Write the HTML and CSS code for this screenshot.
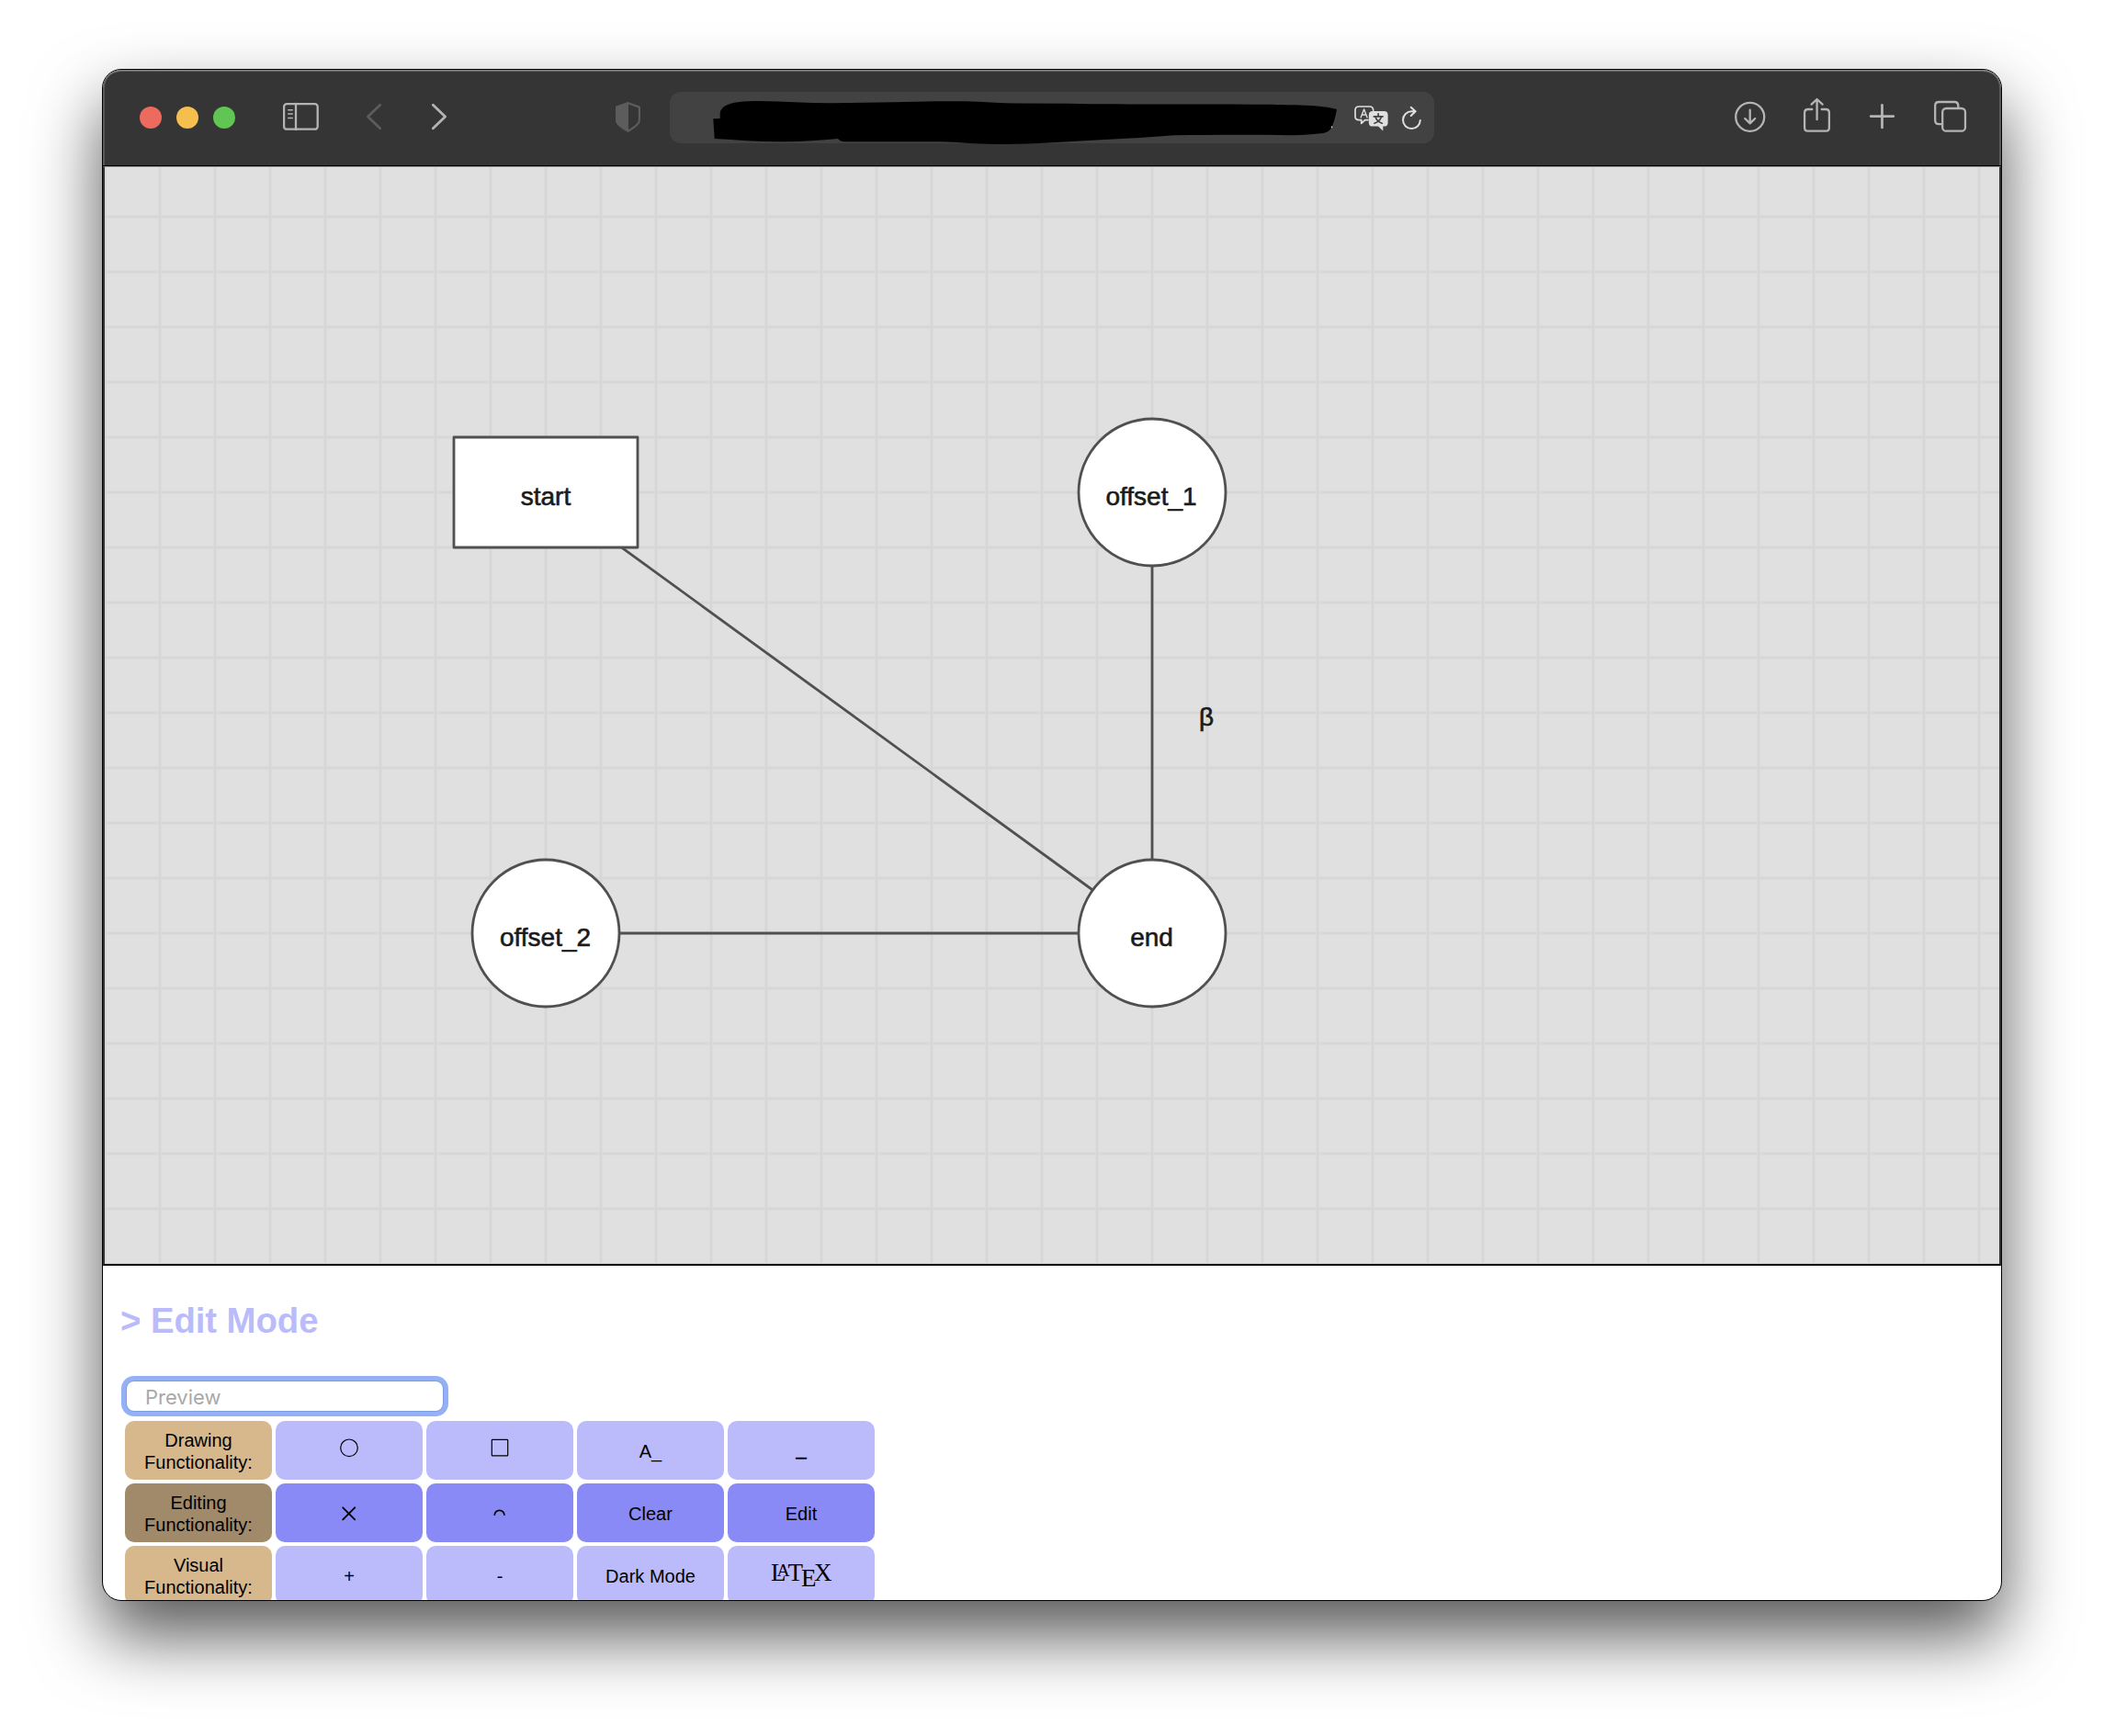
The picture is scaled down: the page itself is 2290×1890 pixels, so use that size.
FILE: index.html
```html
<!DOCTYPE html>
<html lang="en">
<head>
<meta charset="utf-8">
<title>Graph Editor</title>
<link rel="stylesheet" href="styles.css">
</head>
<body>
<main class="window">
  <header class="toolbar">
    <div class="lights"><span class="light red"></span><span class="light yellow"></span><span class="light green"></span></div>
    <svg class="icon sidebar" width="40" height="44" viewBox="308 106 40 44"><rect x="309.1" y="113.1" width="36.6" height="27.6" rx="3"/><path d="M322 113v28"/><path stroke-width="1.6" d="M313.8 119.7h4.4M313.8 124h4.4M313.8 128.5h4.4"/></svg>
    <svg class="icon back" width="18" height="44" viewBox="398 106 18 44"><path stroke-width="2.8" d="M413.7 114.2L400.4 127l13.3 12.8"/></svg>
    <svg class="icon forward" width="18" height="44" viewBox="469 106 18 44"><path stroke-width="2.8" d="M471.3 114.2L484.6 127l-13.3 12.8"/></svg>
    <svg class="shield" width="28" height="44" viewBox="670 106 28 44"><path class="shield-line" d="M683.7 112.2l12.2 4.4v14.5q0 4.6-12.2 11.6q-12.4-7-12.4-11.6v-14.5z"/><path class="shield-fill" d="M684 111l-14 5v15.5q0 5.500 14 12.500z"/></svg>
    <div class="address">
      <svg class="redaction" width="682" height="56" viewBox="775 100 682 56"><path d="M776.3 129.300L783.700 129V123.300C784 117 792 112.500 803 111.300C811 110 819 110 827 110C854 110.500 880 112.500 907 112.300L973 111.300C1000 110.500 1025 110 1050 110.300C1070 110.500 1088 112.500 1107 112.500L1163 112.700C1230 114 1310 113 1380 113.700C1405 114.300 1440 114 1455 119C1454 125 1452.500 131 1450.700 135C1450 140 1446 144 1440 144.900C1430 146 1418 147 1407 147.200C1365 146.500 1320 146.500 1280 147.300C1262 148 1247 150 1230 150.500L1130 155.900C1114 156.500 1099 157 1083 157C1062 157 1043 154.500 1023 154.300H918Q914 154 912 151C893 152.500 873 154.300 853 154.300C827 154.500 802 152.500 777.700 151Z"/><path class="speck" d="M1449 137.500h1.200v1.800h-1.200z"/></svg>
      <svg class="icon bright translate" width="40" height="44" viewBox="1473 106 40 44"><path stroke-width="1.7" d="M1489 130.600h-3.300l-4 3.800v-3.800h-2.600q-4.100 0-4.100-4.100v-6.400q0-4.100 4.100-4.100h11.700q3.700 0 3.900 4.200"/><path stroke-width="1.4" d="M1481.200 127.800l3.400-8.900 3.400 8.900M1482.400 125h4.600"/><path class="solid" d="M1494 121h12.400q4.200 0 4.200 4.200v8.200q0 4.200-4.200 4.200h-1.100v4.800l-5.300-4.800h-6q-4.200 0-4.200-4.200v-8.200q0-4.200 4.200-4.200z"/><path class="cut" d="M1495.300 126.800h9.800M1500.100 123.800v2.600M1497.100 127.500q1.600 5 7.200 6.700M1503.300 127.500q-1.600 5-7.400 6.700"/></svg>
      <svg class="icon bright reload" width="24" height="44" viewBox="1525 106 24 44"><path stroke-width="2" d="M1545.800 131a9.400 9.400 0 1 1-9.400-9.700h4.300M1535.700 116.800l4.900 4.400-4.900 4.800"/></svg>
    </div>
    <svg class="icon download" width="36" height="44" viewBox="1887 106 36 44"><circle cx="1904.700" cy="127.300" r="15.500"/><path d="M1904.700 119.600v14.500M1899.200 129l5.500 5.400 5.500-5.400"/></svg>
    <svg class="icon share" width="32" height="44" viewBox="1962 106 32 44"><path d="M1972.300 119h-4.500q-3.700 0-3.700 3.700v16.200q0 3.700 3.700 3.700h19.400q3.700 0 3.700-3.700v-16.200q0-3.700-3.700-3.700h-4.500M1977.600 130.200v-21.500M1971.600 113.600l6-5.600 6 5.600"/></svg>
    <svg class="icon plus" width="30" height="44" viewBox="2034 106 30 44"><path stroke-width="2.800" d="M2048.500 114.300v24.600M2036.200 126.600h24.600"/></svg>
    <svg class="icon tabs" width="38" height="44" viewBox="2104 106 38 44"><path d="M2113.300 135.200h-3q-4.100 0-4.100-4.100v-16q0-4.100 4.100-4.100h16.900q4.100 0 4.100 4.100v2.700"/><rect x="2114.200" y="118" width="24.800" height="24.700" rx="4"/></svg>
  </header>

  <section class="canvas">
    <svg width="2062" height="1194" viewBox="114 182 2062 1194">
      <defs>
        <pattern id="grid" x="144" y="206" width="60" height="60" patternUnits="userSpaceOnUse">
          <path class="grid-soft" d="M30 0v60M0 30h60"/><path class="grid-core" d="M30 0v60M0 30h60"/>
        </pattern>
      </defs>
      <rect x="114" y="182" width="2062" height="1194" fill="url(#grid)"/>
      <g class="edges"><path d="M594 536L1254 1016"/><path d="M1254 536v480"/><path d="M594 1016h660"/></g>
      <g class="nodes"><rect x="494" y="476" width="200" height="120"/><circle cx="1254" cy="536" r="80"/><circle cx="594" cy="1016" r="80"/><circle cx="1254" cy="1016" r="80"/></g>
      <g class="labels"><text x="594" y="549.500">start</text><text x="1253" y="549.500">offset_1</text><text x="593.500" y="1029.500">offset_2</text><text x="1253.500" y="1029.500">end</text><text x="1313" y="790">β</text></g>
    </svg>
  </section>

  <section class="panel">
    <h3 class="mode">&gt; Edit Mode</h3>
    <input class="preview" type="text" placeholder="Preview">
    <div class="controls">
      <div class="label">Drawing Functionality:</div>
      <div class="button"><svg width="24" height="24" viewBox="0 0 24 24"><circle cx="12" cy="8.300" r="9.300"/></svg></div>
      <div class="button"><svg width="24" height="24" viewBox="0 0 24 24"><rect x="3.300" y="-.700" width="17.400" height="17.600" rx=".600"/></svg></div>
      <div class="button">A_</div>
      <div class="button"><span class="raised">_</span></div>

      <div class="label active">Editing Functionality:</div>
      <div class="button active"><svg class="bold" width="24" height="24" viewBox="0 0 24 24"><path d="M5.200 5.300l13 13M18.200 5.300l-13 13"/></svg></div>
      <div class="button active"><svg class="arc" width="24" height="24" viewBox="0 0 24 24"><path d="M6.200 13.800A5.400 5.400 0 0 1 17 13.800"/></svg></div>
      <div class="button active">Clear</div>
      <div class="button active">Edit</div>

      <div class="label">Visual Functionality:</div>
      <div class="button">+</div>
      <div class="button">-</div>
      <div class="button">Dark Mode</div>
      <div class="button"><svg class="latex" width="68" height="32" viewBox="838 1698 68 32"><text y="1721"><tspan x="839">L</tspan><tspan class="small" x="845.500" y="1715.700">A</tspan><tspan x="857.500" y="1721">T</tspan><tspan x="872" y="1727">E</tspan><tspan x="886" y="1721">X</tspan></text></svg></div>
    </div>
  </section>
</main>
</body>
</html>
```

FILE: styles.css
```css
* { box-sizing: border-box; }

body {
  margin: 0;
  width: 2290px;
  height: 1890px;
  padding: 75px 111px 0;
  overflow: hidden;
  background: #fff;
  font-family: "Liberation Sans", Arial, sans-serif;
}

.window {
  display: flex;
  flex-direction: column;
  width: 2068px;
  height: 1668px;
  border: 1px solid #000;
  border-radius: 21px;
  overflow: hidden;
  background: #fff;
  box-shadow: 0 38px 76px rgba(0, 0, 0, .66);
}

.toolbar {
  display: flex;
  align-items: center;
  flex: none;
  height: 105px;
  background: #353535;
  border-bottom: 1px solid #000;
  border-radius: 20px 20px 0 0;
  box-shadow: inset 0 1px #858585, inset 0 2px #626262, inset 2px 0 #5a5a5a, inset -2px 0 #5a5a5a;
}

.lights { display: flex; gap: 16px; margin-left: 40px; }
.light { width: 24px; height: 24px; border-radius: 50%; }
.red { background: #ed6a5e; }
.yellow { background: #f5bf4f; }
.green { background: #61c554; }

.toolbar svg { flex: none; }
.icon {
  fill: none;
  stroke: #b4b4b4;
  stroke-width: 2.300;
  stroke-linecap: round;
  stroke-linejoin: round;
}
.sidebar { margin-left: 52px; }
.back { margin-left: 50px; stroke: #5c5c5c; }
.forward { margin-left: 53px; }
.shield { margin-left: 183px; }
.shield-line { fill: none; stroke: #5c5c5c; stroke-width: 2.200; stroke-linejoin: round; }
.shield-fill { fill: #5c5c5c; }

.address {
  display: flex;
  align-items: center;
  flex: none;
  width: 832px;
  height: 56px;
  margin-left: 31px;
  border-radius: 12px;
  background: #424242;
}
.redaction { margin-left: 46px; overflow: visible; fill: #000; }
.speck { fill: #ddd; }
.bright { stroke: #dfdfdf; }
.translate { margin-left: 16px; }
.solid { fill: #dfdfdf; stroke: none; }
.cut { stroke: #424242; stroke-width: 1.700; }
.reload { margin-left: 12px; }

.download { margin-left: 326px; }
.share { margin-left: 39px; }
.plus { margin-left: 40px; }
.tabs { margin-left: 40px; }

.canvas {
  flex: none;
  height: 1197px;
  border: solid;
  border-width: 1px 2px 2px;
  border-color: #999 #333 #000;
  background: #e0e0e0;
}
.canvas svg { display: block; }
.grid-soft { stroke: #dbdbdb; stroke-width: 4; }
.grid-core { stroke: #d7d7d7; stroke-width: 2; }
.edges, .nodes { stroke: #505050; stroke-width: 2.800; stroke-linejoin: round; }
.edges { fill: none; }
.nodes { fill: #fff; }
.labels { font-size: 28px; text-anchor: middle; fill: #1a1a1a; stroke: #1a1a1a; stroke-width: .600; }

.panel {
  display: flex;
  flex-direction: column;
  align-items: flex-start;
  flex: 1;
  padding: 37px 0 0 19px;
}
.mode {
  margin: 0;
  font-size: 38.400px;
  line-height: 46px;
  letter-spacing: -.100px;
  color: #bbbbfb;
}
.preview {
  width: 344px;
  height: 32px;
  margin: 43px 0 0 7px;
  padding: 2px 20px 0;
  border: 0;
  border-radius: 8px;
  outline: none;
  box-shadow: 0 0 0 1px #7c9de4, 0 0 0 6px #94b1f5;
  font: 22px/30px Inter, sans-serif;
}
.preview::placeholder { color: #a9a9a9; opacity: 1; }

.controls {
  display: grid;
  grid-template-columns: repeat(5, 160px);
  grid-auto-rows: 64px;
  gap: 4px;
  margin: 11px 0 0 5px;
}
.label, .button {
  display: flex;
  align-items: center;
  justify-content: center;
  padding-top: 2px;
  border-radius: 10px;
  font-size: 20px;
  line-height: 24px;
  text-align: center;
  color: #000;
}
.label { padding-left: 20px; padding-right: 20px; background: #d7b88d; }
.label.active { background: #a18a6a; }
.button { background: #bbbbfb; }
.button.active { background: #8a8af7; }
.button svg { overflow: visible; fill: none; stroke: #000; stroke-width: 1.200; }
.button .bold { stroke-width: 1.900; stroke-linecap: round; }
.button .arc { stroke-width: 1.800; }
.raised { position: relative; top: -3px; -webkit-text-stroke: .500px #000; }
.button .latex { margin-top: -4px; fill: #000; stroke: none; font-family: "Liberation Serif", serif; font-size: 27px; }
.small { font-size: 19.500px; }
```
